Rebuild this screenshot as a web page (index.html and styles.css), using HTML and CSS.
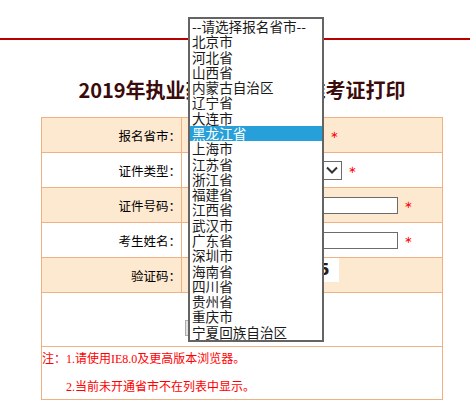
FILE: index.html
```html
<!DOCTYPE html>
<html lang="zh-CN">
<head>
<meta charset="utf-8">
<title>2019年执业药师资格考试准考证打印</title>
<link rel="stylesheet" href="styles.css">
</head>
<body>
<div class="header"></div>
<div class="redline"></div>
<div class="main">
  <h1 class="title">2019年执业药师资格考试准考证打印</h1>
  <div class="form">
    <div class="row shade">
      <div class="label">报名省市：</div>
      <div class="field">
        <span class="select s1"><span class="select-text">黑龙江省</span><svg class="chev" width="12" height="8" viewBox="0 0 12 8"><path d="M1 1.5 L6 6.5 L11 1.5" fill="none" stroke="#333" stroke-width="2"/></svg></span>
        <span class="req">∗</span>
      </div>
    </div>
    <div class="row">
      <div class="label">证件类型：</div>
      <div class="field">
        <span class="select s2"><span class="select-text">身份证</span><svg class="chev" width="12" height="8" viewBox="0 0 12 8"><path d="M1 1.5 L6 6.5 L11 1.5" fill="none" stroke="#333" stroke-width="2"/></svg></span>
        <span class="req">∗</span>
      </div>
    </div>
    <div class="row shade">
      <div class="label">证件号码：</div>
      <div class="field">
        <input class="text" type="text">
        <span class="req">∗</span>
      </div>
    </div>
    <div class="row">
      <div class="label">考生姓名：</div>
      <div class="field">
        <input class="text" type="text">
        <span class="req">∗</span>
      </div>
    </div>
    <div class="row shade">
      <div class="label">验证码：</div>
      <div class="field">
        <input class="text code" type="text">
        <span class="captcha">2815</span>
      </div>
    </div>
    <div class="row actions">
      <button class="btn" type="button">查询</button>
    </div>
    <div class="notes">
      <div class="note-line">注：1.请使用IE8.0及更高版本浏览器。</div>
      <div class="note-line indent">2.当前未开通省市不在列表中显示。</div>
    </div>
  </div>
</div>
<ul class="popup">
  <li>--请选择报名省市--</li>
  <li>北京市</li>
  <li>河北省</li>
  <li>山西省</li>
  <li>内蒙古自治区</li>
  <li>辽宁省</li>
  <li>大连市</li>
  <li class="active">黑龙江省</li>
  <li>上海市</li>
  <li>江苏省</li>
  <li>浙江省</li>
  <li>福建省</li>
  <li>江西省</li>
  <li>武汉市</li>
  <li>广东省</li>
  <li>深圳市</li>
  <li>海南省</li>
  <li>四川省</li>
  <li>贵州省</li>
  <li>重庆市</li>
  <li>宁夏回族自治区</li>
</ul>
</body>
</html>
```
FILE: styles.css
```css
* { box-sizing: border-box; }
body {
  margin: 0;
  background: #fff;
  color: #000;
  font-family: "Noto Sans CJK SC", "Noto Sans", sans-serif;
}
.header { height: 38px; }
.redline { height: 2px; background: #b80000; }
.main { width: 402px; margin-left: 41px; }
.title {
  margin: 36px 0 13px;
  height: 28px;
  line-height: 28px;
  font-size: 20px;
  font-weight: bold;
  color: #3b0b0b;
  text-align: center;
  white-space: nowrap;
}
.form { border: 1px solid #efb083; }
.row {
  display: flex;
  height: 35px;
  border-bottom: 1px solid #efb083;
}
.row.shade { background: #fde9d0; }
.label {
  width: 140px;
  flex: none;
  border-right: 1px solid #efb083;
  display: flex;
  align-items: center;
  justify-content: flex-end;
  font-size: 12.5px;
  color: #000;
}
.field {
  flex: 1;
  display: flex;
  align-items: center;
  padding-left: 6px;
}
.select {
  display: inline-flex;
  align-items: center;
  justify-content: space-between;
  background: #fff;
  border: 1px solid #6b6b6b;
  padding: 0 3px 0 3px;
  font-size: 13px;
}
.s1 { width: 136px; height: 20px; }
.s2 { width: 154px; height: 19px; }
.chev { display: block; }
.text {
  width: 210px;
  height: 17px;
  border: 1px solid #6b6b6b;
  background: #fff;
  padding: 0;
  margin: 0;
}
.code { width: 80px; }
.req {
  margin-left: 6px;
  color: #f00;
  font-family: "DejaVu Sans", sans-serif;
  font-size: 10px;
  line-height: 1;
}
.captcha {
  align-self: flex-start;
  width: 60px;
  height: 24px;
  margin-left: 11px;
  background: #fff;
  color: #2a1a1a;
  font-family: "DejaVu Sans", sans-serif;
  font-weight: bold;
  font-size: 16px;
  line-height: 24px;
  letter-spacing: 2px;
  text-align: right;
  padding-right: 9px;
}
.actions {
  height: 54px;
  justify-content: center;
  align-items: flex-start;
}
.btn {
  margin-top: 27px;
  width: 115px;
  height: 16px;
  background: #e1e1e1;
  border: 1px solid #adadad;
  padding: 0;
  font-size: 12px;
  line-height: 14px;
}
.notes {
  height: 52px;
  color: #f00;
  font-size: 12px;
  font-family: "Liberation Serif", "Noto Sans CJK SC", serif;
}
.note-line { height: 24px; line-height: 24px; white-space: nowrap; }
.note-line.indent { margin-top: 4px; padding-left: 24px; }
.popup {
  position: absolute;
  left: 188px;
  top: 17px;
  width: 136px;
  margin: 0;
  padding: 0;
  list-style: none;
  background: #fff;
  border: 2px solid #646464;
  font-size: 13.6px;
  color: #1a1a1a;
}
.popup li {
  height: 15.286px;
  line-height: 15.286px;
  padding-left: 2px;
  white-space: nowrap;
}
.popup li.active { background: #27a0da; color: #fff; }
```
